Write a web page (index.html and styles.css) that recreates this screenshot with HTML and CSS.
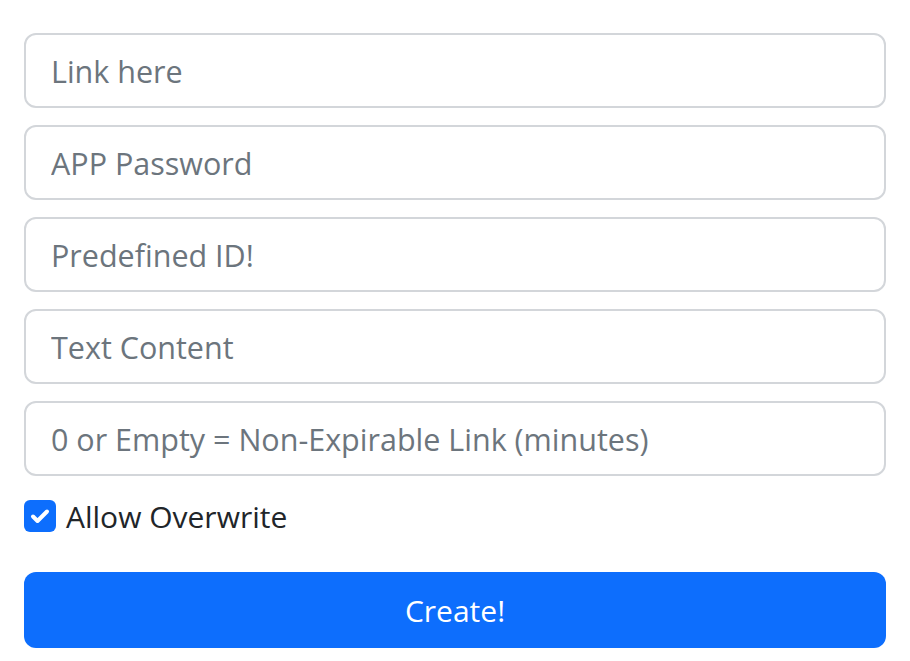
FILE: index.html
```html
<!DOCTYPE html>
<html>
<head>
<meta charset="utf-8">
<link rel="stylesheet" href="styles.css">
</head>
<body>
<form class="form">
  <input class="field" type="text" placeholder="Link here">
  <input class="field" type="password" placeholder="APP Password">
  <input class="field" type="text" placeholder="Predefined ID!">
  <input class="field" type="text" placeholder="Text Content">
  <input class="field" type="text" placeholder="0 or Empty = Non-Expirable Link (minutes)">
  <label class="check">
    <span class="box"><svg viewBox="0 0 32 32" width="32" height="32"><path d="M9 16.5l4.5 4.5L23 11.5" fill="none" stroke="#fff" stroke-width="4" stroke-linecap="round" stroke-linejoin="round"/></svg></span>
    <span class="check-label">Allow Overwrite</span>
  </label>
  <button class="btn" type="button">Create!</button>
</form>
</body>
</html>
```
FILE: styles.css
```css
* { box-sizing: border-box; }
html, body { margin: 0; padding: 0; background: #fff; }
body { font-family: "Open Sans", "Noto Sans", sans-serif; }
.form {
  display: flex;
  flex-direction: column;
  gap: 17px;
  padding: 33px 24px 0 24px;
}
.field {
  display: block;
  width: 100%;
  height: 75px;
  padding: 0 25px;
  font-family: inherit;
  font-size: 30.5px;
  color: #212529;
  border: 2px solid #d3d6da;
  border-radius: 12px;
  outline: none;
  background: #fff;
}
.field::placeholder { color: #6c757d; opacity: 1; }
.check {
  display: flex;
  align-items: center;
  gap: 10px;
  height: 42px;
  margin-top: 2px;
}
.box {
  width: 32px;
  height: 32px;
  border-radius: 6px;
  background: #0d6efd;
  display: flex;
  align-items: center;
  justify-content: center;
}
.check-label { font-size: 30px; color: #212529; }
.btn {
  margin-top: 18px;
  height: 76px;
  width: 100%;
  border: none;
  border-radius: 12px;
  background: #0d6efd;
  color: #fff;
  font-family: inherit;
  font-size: 30px;
}
```
